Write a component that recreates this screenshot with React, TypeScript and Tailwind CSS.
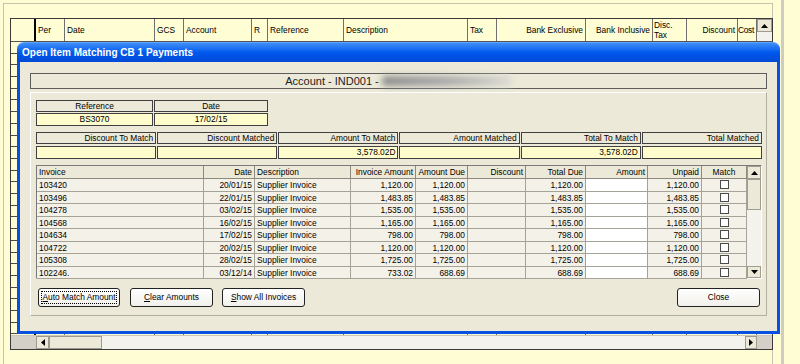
import React from "react";

const bgCols = [
  { w: "w-[29px]", label: "Per", cls: "justify-start px-[2px]" },
  { w: "w-[90px]", label: "Date", cls: "justify-start px-[2px]" },
  { w: "w-[29px]", label: "GCS", cls: "justify-start px-[2px]" },
  { w: "w-[68px]", label: "Account", cls: "justify-start px-[2px]" },
  { w: "w-[16px]", label: "R", cls: "justify-start px-[2px]" },
  { w: "w-[76px]", label: "Reference", cls: "justify-start px-[2px]" },
  { w: "w-[124px]", label: "Description", cls: "justify-start px-[2px]" },
  { w: "w-[29px]", label: "Tax", cls: "justify-start px-[2px]" },
  { w: "w-[89px]", label: "Bank Exclusive", cls: "justify-end px-[2px]" },
  { w: "w-[67px]", label: "Bank Inclusive", cls: "justify-end px-[2px]" },
  { w: "w-[34px]", label: "Disc. Tax", cls: "justify-start px-[1px]" },
  { w: "w-[51px]", label: "Discount", cls: "justify-end px-[2px]" },
  { w: "w-[19px]", label: "Cost", cls: "justify-start pl-0 tracking-[-0.3px]" },
];

const rows = [
  ["103420", "20/01/15", "1,120.00", "1,120.00", "1,120.00", "1,120.00"],
  ["103496", "22/01/15", "1,483.85", "1,483.85", "1,483.85", "1,483.85"],
  ["104278", "03/02/15", "1,535.00", "1,535.00", "1,535.00", "1,535.00"],
  ["104568", "16/02/15", "1,165.00", "1,165.00", "1,165.00", "1,165.00"],
  ["104634", "17/02/15", "798.00", "798.00", "798.00", "798.00"],
  ["104722", "20/02/15", "1,120.00", "1,120.00", "1,120.00", "1,120.00"],
  ["105308", "28/02/15", "1,725.00", "1,725.00", "1,725.00", "1,725.00"],
  ["102246.", "03/12/14", "733.02", "688.69", "688.69", "688.69"],
];

function Up() {
  return (
    <svg width="7" height="4" viewBox="0 0 7 4">
      <polygon points="0,4 7,4 3.5,0" fill="#000" />
    </svg>
  );
}
function Down() {
  return (
    <svg width="7" height="4" viewBox="0 0 7 4">
      <polygon points="0,0 7,0 3.5,4" fill="#000" />
    </svg>
  );
}
function Left() {
  return (
    <svg width="4" height="7" viewBox="0 0 4 7">
      <polygon points="4,0 4,7 0,3.5" fill="#000" />
    </svg>
  );
}
function Right() {
  return (
    <svg width="4" height="7" viewBox="0 0 4 7">
      <polygon points="0,0 0,7 4,3.5" fill="#000" />
    </svg>
  );
}

const hdrBox =
  "h-[12px] border border-[#404040] bg-[#ece9d8] flex items-center px-[2px] leading-none";
const valBox =
  "h-[13px] border border-[#404040] bg-[#fffdcc] flex items-center px-[2px] leading-none";

const tCell =
  "h-[12.5px] leading-[12px] border-r border-b border-[#a5a398] px-[2px] whitespace-nowrap overflow-hidden bg-[#f4f2e8]";
const tHead =
  "h-[13px] leading-[12px] border-r border-b border-[#8c8a7e] px-[2px] whitespace-nowrap overflow-hidden bg-[#ece9d8]";

function Btn({ children, focus, className }: { children: React.ReactNode; focus?: boolean; className?: string }) {
  return (
    <div
      className={
        "h-[19px] border border-[#222] rounded-[3px] bg-gradient-to-b from-white to-[#f1f0ea] flex items-center justify-center p-[2px] " +
        (className || "")
      }
    >
      <div
        className={
          "h-full w-full flex items-center justify-center leading-none " +
          (focus ? "border border-dotted border-black" : "")
        }
      >
        {children}
      </div>
    </div>
  );
}

export default function App() {
  return (
    <div className="w-[800px] h-[364px] overflow-hidden bg-[#fffdd4] flex font-['Liberation_Sans',Arial,sans-serif] text-[8.4px] text-black">
      <div className="relative w-[781px] h-full pl-[3px] pt-[3px]">
        {/* background frame */}
        <div className="w-[770px] h-full border-l border-t border-r border-[#c5c3ad] pl-[6px] pt-[14px]">
          {/* background grid */}
          <div className="w-[763px] h-[332px] border border-[#3a3a3a] flex flex-col">
            <div className="h-[23px] flex border-b border-[#555]">
              <div className="w-[25px] border-r-2 border-black" />
              {bgCols.map((c) => (
                <div key={c.label} className={`${c.w} border-r border-[#6f6f6f] flex items-center ${c.cls}`}>
                  {c.label === "Disc. Tax" ? (
                    <span className="leading-[10px]">
                      Disc.
                      <br />
                      Tax
                    </span>
                  ) : (
                    <span className="whitespace-nowrap">{c.label}</span>
                  )}
                </div>
              ))}
              <div className="w-[15px] flex flex-col">
                <div className="h-[13px] border border-[#9d9b8f] bg-[#ece9d8] flex items-center justify-center">
                  <Up />
                </div>
                <div className="flex-1 bg-[#f3f2ec]" />
              </div>
            </div>
            <div className="flex-1 flex bg-[repeating-linear-gradient(to_bottom,transparent_0px,transparent_10.7px,#4a4a4a_10.7px,#4a4a4a_11.7px)]">
              <div className="w-[25px] border-r-2 border-black" />
              {bgCols.map((c) => (
                <div key={c.label} className={`${c.w} border-r border-[#6f6f6f]`} />
              ))}
              <div className="w-[15px] bg-[#f3f2ec]" />
            </div>
            <div className="h-[14px] flex border-t border-[#c8c6ba]">
              <div className="w-[25px] bg-[#d4d0c8]" />
              <div className="w-[13px] border border-[#9d9b8f] bg-[#ece9d8] flex items-center justify-center">
                <Left />
              </div>
              <div className="w-[53px] border border-[#9d9b8f] bg-[#ece9d8]" />
              <div className="flex-1 bg-[#f3f2ec]" />
              <div className="w-[12px] border border-[#9d9b8f] bg-[#ece9d8] flex items-center justify-center">
                <Right />
              </div>
              <div className="w-[15px] bg-[#d4d0c8]" />
            </div>
          </div>
        </div>

        {/* dialog window */}
        <div className="absolute left-[17px] top-[42px] w-[763px] h-[292px] flex flex-col">
          <div className="h-[20px] rounded-t-[7px] bg-gradient-to-b from-[#3d8ef7] via-[#0058ee] to-[#0049d4] flex items-center pl-[5px] border-t border-[#5fa2ff]">
            <span className="text-white font-bold text-[10px] leading-none whitespace-nowrap">
              Open Item Matching CB 1 Payments
            </span>
          </div>
          <div className="flex-1 border-l-[3px] border-r-[3px] border-b-[3px] border-[#0650e2] bg-[#ece9d8] pl-[10px] pt-[11px]">
            {/* account bar */}
            <div className="w-[737px] h-[16px] border border-[#5d5d5d] flex items-center justify-center">
              <span className="text-[11px] leading-none whitespace-nowrap text-[#222]">Account - IND001 -&nbsp;</span>
              <span className="w-[130px] h-[10px] rounded-[4px] bg-gradient-to-r from-[#8d8d8d] via-[#a9a9a9] to-[#dcdcd4] blur-[3px]" />
            </div>
            {/* group panel */}
            <div className="mt-[3px] w-[737px] h-[224px] border border-t-white border-l-white border-r-[#b2afa0] border-b-[#b2afa0] px-[5px] pt-[7px] flex flex-col">
              <div className="flex gap-[1px]">
                <div className="w-[117px] flex flex-col gap-[1px]">
                  <div className={hdrBox + " justify-center"}>Reference</div>
                  <div className={valBox + " justify-center"}>BS3070</div>
                </div>
                <div className="w-[114px] flex flex-col gap-[1px]">
                  <div className={hdrBox + " justify-center"}>Date</div>
                  <div className={valBox + " justify-center"}>17/02/15</div>
                </div>
              </div>
              <div className="mt-[6px] w-[726px] grid grid-cols-6 gap-x-[1px] gap-y-[2px]">
                <div className={hdrBox + " justify-end"}>Discount To Match</div>
                <div className={hdrBox + " justify-end"}>Discount Matched</div>
                <div className={hdrBox + " justify-end"}>Amount To Match</div>
                <div className={hdrBox + " justify-end"}>Amount Matched</div>
                <div className={hdrBox + " justify-end"}>Total To Match</div>
                <div className={hdrBox + " justify-end"}>Total Matched</div>
                <div className={valBox + " justify-end"} />
                <div className={valBox + " justify-end"} />
                <div className={valBox + " justify-end"}>3,578.02D</div>
                <div className={valBox + " justify-end"} />
                <div className={valBox + " justify-end"}>3,578.02D</div>
                <div className={valBox + " justify-end"} />
              </div>
              {/* invoice table */}
              <div className="mt-[6px] w-[726px] h-[114px] border border-[#7a7a7a] border-r-white border-b-white flex">
                <div className="grid grid-cols-[167px_51px_96px_65px_52px_58px_60px_62px_54px_45px] content-start">
                  <div className={tHead}>Invoice</div>
                  <div className={tHead + " text-right"}>Date</div>
                  <div className={tHead}>Description</div>
                  <div className={tHead + " text-right"}>Invoice Amount</div>
                  <div className={tHead + " text-right"}>Amount Due</div>
                  <div className={tHead + " text-right"}>Discount</div>
                  <div className={tHead + " text-right"}>Total Due</div>
                  <div className={tHead + " text-right"}>Amount</div>
                  <div className={tHead + " text-right"}>Unpaid</div>
                  <div className={tHead + " text-center"}>Match</div>
                  {rows.map((r) => (
                    <React.Fragment key={r[0]}>
                      <div className={tCell}>{r[0]}</div>
                      <div className={tCell + " text-right"}>{r[1]}</div>
                      <div className={tCell}>Supplier Invoice</div>
                      <div className={tCell + " text-right"}>{r[2]}</div>
                      <div className={tCell + " text-right"}>{r[3]}</div>
                      <div className={tCell} />
                      <div className={tCell + " text-right"}>{r[4]}</div>
                      <div className={tCell + " !bg-white"} />
                      <div className={tCell + " text-right"}>{r[5]}</div>
                      <div className={tCell + " flex items-center justify-center"}>
                        <div className="w-[9px] h-[9px] border border-[#4b4b4b] bg-white" />
                      </div>
                    </React.Fragment>
                  ))}
                </div>
                <div className="w-[14px] flex flex-col bg-[#f3f2ec]">
                  <div className="h-[13px] border border-[#a09e92] bg-[#ece9d8] flex items-center justify-center">
                    <Up />
                  </div>
                  <div className="h-[31px] border border-[#a09e92] bg-[#ece9d8]" />
                  <div className="flex-1" />
                  <div className="h-[12px] border border-[#a09e92] bg-[#ece9d8] flex items-center justify-center">
                    <Down />
                  </div>
                </div>
              </div>
              {/* buttons */}
              <div className="mt-[9px] flex pl-[2px] pr-[1px]">
                <Btn focus className="w-[82px]">
                  <span>
                    <span className="underline">A</span>uto Match Amount
                  </span>
                </Btn>
                <Btn className="w-[83px] ml-[10px]">
                  <span>
                    <span className="underline">C</span>lear Amounts
                  </span>
                </Btn>
                <Btn className="w-[83px] ml-[9px]">
                  <span>
                    <span className="underline">S</span>how All Invoices
                  </span>
                </Btn>
                <Btn className="w-[83px] ml-auto">Close</Btn>
              </div>
            </div>
          </div>
        </div>
      </div>
      <div className="w-[3px] h-full bg-[#cfcdc2]" />
    </div>
  );
}
